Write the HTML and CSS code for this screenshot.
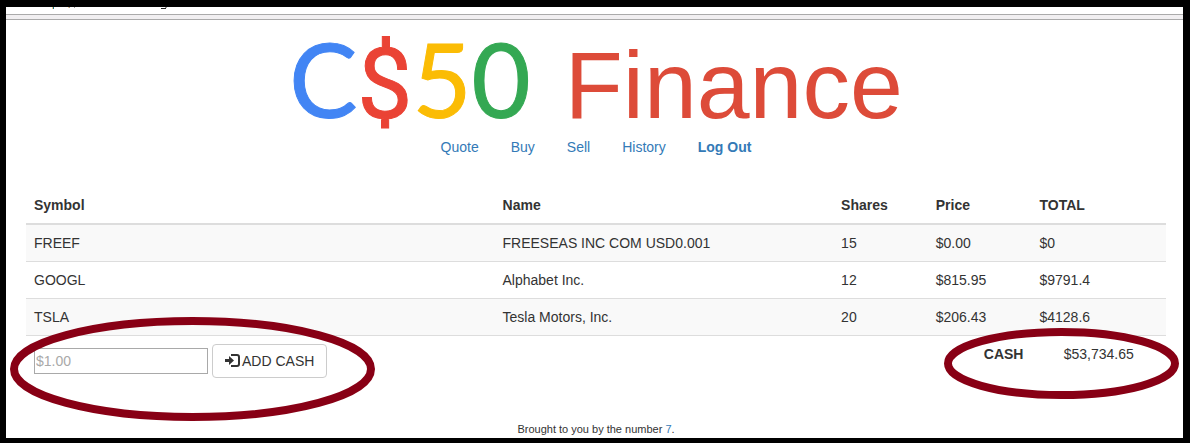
FILE: index.html
```html
<!DOCTYPE html>
<html lang="en">
<head>
<meta charset="utf-8">
<title>C$50 Finance</title>
<link rel="stylesheet" href="styles.css">
</head>
<body>
<div class="frame">
  <div class="toolbar">
    <svg class="toolbar-marks" width="180" height="3" viewBox="0 0 180 3" aria-hidden="true">
      <path fill="#f5c98a" d="M46 0h1v2h-1zM62 0h1v1h-1z"/>
      <path fill="#16798c" d="M47 0h1v2h-1z"/>
      <path fill="#999" d="M63 0h1v1h-1zM68 0h1v1h-1zM159 0h2v1h-2z"/>
      <path fill="#222" d="M155 1h5v1h-5z"/>
    </svg>
  </div>
  <div class="container">
    <header class="top">
      <a class="logo" href="#" aria-label="C$50 Finance">
        <span class="mark"><span class="blue">C</span><span class="red">$</span><span class="yellow">5</span><span class="green">0</span></span>
        <span class="word">Finance</span>
      </a>
      <nav class="nav">
        <a href="#">Quote</a>
        <a href="#">Buy</a>
        <a href="#">Sell</a>
        <a href="#">History</a>
        <a href="#"><strong>Log Out</strong></a>
      </nav>
    </header>
    <main class="portfolio">
      <table class="table">
        <colgroup>
          <col class="col-symbol"><col class="col-name"><col class="col-shares"><col class="col-price"><col class="col-total">
        </colgroup>
        <thead>
          <tr><th>Symbol</th><th>Name</th><th>Shares</th><th>Price</th><th>TOTAL</th></tr>
        </thead>
        <tbody>
          <tr class="odd"><td>FREEF</td><td>FREESEAS INC COM USD0.001</td><td>15</td><td>$0.00</td><td>$0</td></tr>
          <tr><td>GOOGL</td><td>Alphabet Inc.</td><td>12</td><td>$815.95</td><td>$9791.4</td></tr>
          <tr class="odd"><td>TSLA</td><td>Tesla Motors, Inc.</td><td>20</td><td>$206.43</td><td>$4128.6</td></tr>
          <tr>
            <td colspan="3">
              <form class="cash-form">
                <input class="cash-input" type="text" placeholder="$1.00" aria-label="Cash amount">
                <button class="btn" type="button">
                  <svg width="15" height="14" viewBox="0 0 15 14" aria-hidden="true">
                    <path fill="#333" d="M0 5h4V2l5 4.500-5 4.500V8H0z"/>
                    <path fill="none" stroke="#333" stroke-width="2" d="M6 1h6q2 0 2 2v7q0 2-2 2H6"/>
                  </svg>
                  ADD CASH
                </button>
              </form>
            </td>
            <td class="cash-label"><strong>CASH</strong></td>
            <td class="cash-value">$53,734.65</td>
          </tr>
        </tbody>
      </table>
      <svg class="ring ring-form" viewBox="0 0 365 104" aria-hidden="true"><ellipse cx="182.500" cy="52" rx="178.500" ry="48"/></svg>
      <svg class="ring ring-cash" viewBox="0 0 235 71" aria-hidden="true"><ellipse cx="117.500" cy="35.500" rx="113.500" ry="31.500"/></svg>
    </main>
    <footer class="bottom">Brought to you by the number <a href="#">7</a>.</footer>
  </div>
</div>
</body>
</html>
```
FILE: styles.css
```css
* { box-sizing: border-box; }

body {
  margin: 0;
  background: #fff;
  color: #333;
  font: 14px/20px "Liberation Sans", Arial, sans-serif;
}

a { color: #337ab7; text-decoration: none; }

.frame {
  min-height: 100vh;
  border: solid #000;
  border-width: 7px 7px 5px 6px;
}

.toolbar {
  height: 13px;
  border-bottom: 1px solid #aaa;
  background: linear-gradient(#fff 7px, #aaa 7px, #aaa 8px, #f1eff1 8px);
}

.toolbar-marks { display: block; }

.container { padding: 0 17px 0 20px; }

.top {
  display: flex;
  flex-direction: column;
  align-items: center;
}

.logo {
  display: flex;
  align-items: baseline;
  gap: 34px;
  height: 117px;
  line-height: 118px;
}

.mark {
  display: flex;
  align-items: baseline;
  font-family: Lato, sans-serif;
  font-size: 102px;
  -webkit-text-stroke: 1px currentColor;
}

.word { color: #dd4b39; font-size: 95px; }
.blue { color: #4285f4; }
.red { color: #ea4335; font-family: Roboto, sans-serif; font-size: 98px; }
.yellow { color: #fbbc05; }
.green { color: #34a853; }

.nav { display: flex; gap: 32px; }

.portfolio { position: relative; margin-top: 30px; }

.table {
  width: 100%;
  table-layout: fixed;
  border-collapse: collapse;
}

.col-symbol { width: 41.1%; }
.col-name { width: 29.7%; }
.col-shares { width: 8.3%; }
.col-price { width: 9.1%; }

.table th,
.table td {
  padding: 8px;
  text-align: left;
  vertical-align: top;
  border-top: 1px solid #ddd;
}

.table th { border-top: 0; border-bottom: 2px solid #ddd; }
.table .odd { background: #f9f9f9; }
.table .cash-label { text-align: right; }
.table .cash-value { text-align: center; }

.cash-form { display: flex; align-items: center; gap: 4px; }

.cash-input {
  width: 174px;
  height: 26px;
  padding: 1px;
  border: 1px solid #a9a9a9;
  font: inherit;
}

.cash-input::placeholder { color: #a9a9a9; }

.btn {
  display: flex;
  align-items: center;
  gap: 2px;
  padding: 6px 12px;
  border: 1px solid #ccc;
  border-radius: 4px;
  background: #fff;
  color: #333;
  font: inherit;
}

/* Ring highlights over the cash controls */
.ring {
  position: absolute;
  fill: none;
  stroke: #880015;
  stroke-width: 8px;
  pointer-events: none;
}

.ring-form { left: -16px; bottom: -35px; width: 365px; height: 104px; }
.ring-cash { right: -13px; bottom: -13px; width: 235px; height: 71px; }

.bottom {
  margin-top: 34px;
  text-align: center;
  font-size: 11px;
  line-height: 18px;
}
```
